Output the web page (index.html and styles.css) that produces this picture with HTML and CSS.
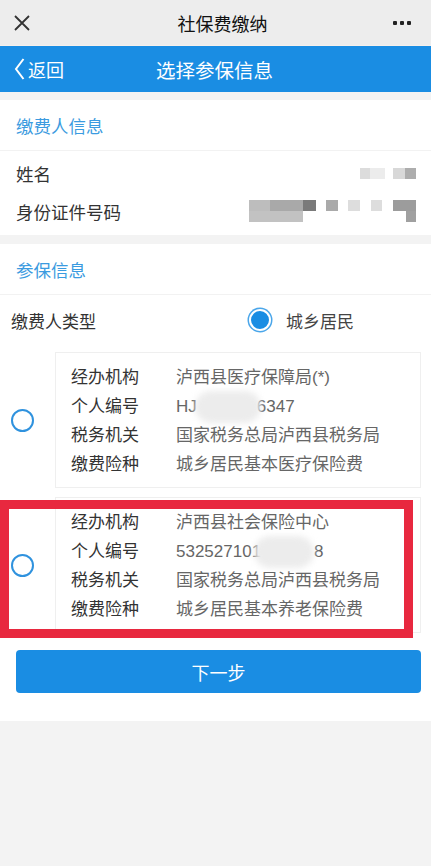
FILE: index.html
```html
<!DOCTYPE HTML>
<html lang="zh-CN">
<head>
    <meta charset="UTF-8">
    <title>社保费缴纳</title>
    <link rel="stylesheet" href="styles.css">
</head>
<body>
<div class="topbar">
    <svg class="close" width="16" height="16" viewBox="0 0 16 16"><path d="M1 1L15 15M15 1L1 15" stroke="#333" stroke-width="1.8" fill="none"/></svg>
    <div class="topTitle">社保费缴纳</div>
    <div class="more"><i></i><i></i><i></i></div>
</div>
<div class="navbar">
    <a class="back" href="#">
        <svg width="11" height="22" viewBox="0 0 11 22"><path d="M9.5 1L2 11L9.5 21" stroke="#fff" stroke-width="2" fill="none"/></svg>
        返回
    </a>
    <div class="navTitle">选择参保信息</div>
</div>

<div class="sec">
    <div class="secHead">缴费人信息</div>
    <ul class="infoList">
        <li>
            <span>姓名</span>
            <svg class="mosaic" width="56" height="11" viewBox="0 0 56 11">
                <rect x="0" y="0" width="10" height="11" fill="#dcdcdc"/>
                <rect x="10" y="0" width="15" height="11" fill="#ececec"/>
                <rect x="33" y="0" width="12" height="11" fill="#d8d8d8"/>
                <rect x="45" y="0" width="11" height="11" fill="#adadad"/>
            </svg>
        </li>
        <li>
            <span>身份证件号码</span>
            <svg class="mosaic" width="167" height="22" viewBox="0 0 167 22">
                <rect x="0" y="0" width="21" height="11" fill="#bdbdbd"/>
                <rect x="21" y="0" width="33" height="11" fill="#a9a9a9"/>
                <rect x="54" y="0" width="13" height="11" fill="#7a7a7a"/>
                <rect x="77" y="0" width="12" height="11" fill="#aaaaaa"/>
                <rect x="99" y="0" width="12" height="11" fill="#dddddd"/>
                <rect x="122" y="0" width="11" height="11" fill="#dddddd"/>
                <rect x="144" y="0" width="23" height="11" fill="#9c9c9c"/>
                <rect x="0" y="11" width="54" height="11" fill="#c2c2c2"/>
                <rect x="157" y="11" width="10" height="11" fill="#a0a0a0"/>
            </svg>
        </li>
    </ul>
</div>

<div class="sec sec2">
    <div class="secHead">参保信息</div>
    <div class="typeRow">
        <span class="typeLabel">缴费人类型</span>
        <span class="typeVal"><i class="radioOn"></i>城乡居民</span>
    </div>
    <div class="items">
        <div class="item">
            <div class="radioBox"><i class="radio"></i></div>
            <div class="card">
                <div class="row"><span class="lab">经办机构</span><span class="val">泸西县医疗保障局(*)</span></div>
                <div class="row"><span class="lab">个人编号</span><span class="val">HJ<i class="mask m1"></i>6347</span></div>
                <div class="row"><span class="lab">税务机关</span><span class="val">国家税务总局泸西县税务局</span></div>
                <div class="row"><span class="lab">缴费险种</span><span class="val">城乡居民基本医疗保险费</span></div>
            </div>
        </div>
        <div class="item">
            <div class="radioBox"><i class="radio"></i></div>
            <div class="card">
                <div class="row"><span class="lab">经办机构</span><span class="val">泸西县社会保险中心</span></div>
                <div class="row"><span class="lab">个人编号</span><span class="val">532527101<i class="mask m2"></i>8</span></div>
                <div class="row"><span class="lab">税务机关</span><span class="val">国家税务总局泸西县税务局</span></div>
                <div class="row"><span class="lab">缴费险种</span><span class="val">城乡居民基本养老保险费</span></div>
            </div>
            <div class="redMark"></div>
        </div>
    </div>
    <button class="nextBtn">下一步</button>
</div>
</body>
</html>
```

FILE: styles.css
```css
body{
    margin:0;
    padding:0;
    background:#f3f3f3;
    font-family:"Liberation Sans","Noto Sans CJK SC",sans-serif;
    color:#333;
}
ul{
    list-style:none;
    margin:0;
    padding:0;
}
.topbar{
    height:46px;
    background:#ededed;
    display:flex;
    align-items:center;
    justify-content:space-between;
    padding:0 20px 0 14px;
    border-bottom:1px solid #f6f0ec;
    box-sizing:border-box;
}
.close{
    display:block;
}
.topTitle{
    font-size:18px;
    color:#111;
    margin-left:22px;
}
.more{
    display:flex;
    gap:3px;
}
.more i{
    width:4px;
    height:4px;
    background:#222;
    border-radius:1px;
}
.navbar{
    height:46px;
    background:#1a8de3;
    display:flex;
    align-items:center;
    color:#fff;
}
.back{
    display:flex;
    align-items:center;
    gap:3px;
    color:#fff;
    text-decoration:none;
    font-size:18px;
    padding-left:14px;
    width:128px;
    box-sizing:border-box;
}
.navTitle{
    font-size:19.5px;
    margin-left:28px;
}
.sec{
    background:#fff;
    margin-top:8px;
}
.sec2{
    margin-top:9px;
    padding-bottom:28px;
}
.secHead{
    height:46px;
    line-height:46px;
    padding:4px 0 0 16px;
    font-size:17.5px;
    color:#3b9be0;
    border-bottom:1px solid #f2f2f2;
}
.infoList{
    padding:3px 0 5px;
}
.infoList li{
    height:38px;
    display:flex;
    align-items:center;
    justify-content:space-between;
    padding:0 15px 0 16px;
    font-size:17.5px;
    color:#333;
}
.mosaic{
    display:block;
    filter:blur(0.6px);
}
.typeRow{
    height:50px;
    display:flex;
    align-items:center;
    font-size:17px;
}
.typeLabel{
    width:238px;
    padding-left:11px;
}
.typeVal{
    display:flex;
    align-items:center;
    color:#444;
}
.radioOn{
    width:18px;
    height:18px;
    border-radius:50%;
    background:#1a8de3;
    border:2px solid #fff;
    box-shadow:0 0 0 1.5px #4aa6ea;
    margin-right:15px;
}
.items{
    padding-top:7px;
}
.item{
    position:relative;
    display:flex;
    margin-bottom:9px;
}
.radioBox{
    width:55px;
    display:flex;
    align-items:center;
}
.radio{
    width:19px;
    height:19px;
    border-radius:50%;
    border:2px solid #2f92de;
    margin-left:11px;
}
.card{
    flex:1;
    margin-right:10px;
    border:1px solid #efefef;
    padding:10px 0 9px 15px;
    box-sizing:border-box;
    height:136px;
}
.row{
    height:29px;
    line-height:29px;
    display:flex;
    font-size:17px;
}
.lab{
    width:105px;
    color:#333;
}
.val{
    color:#666;
    position:relative;
    display:flex;
    align-items:center;
}
.mask{
    display:inline-block;
    height:32px;
    border-radius:16px;
    background:#ececec;
    filter:blur(3px);
}
.m1{
    width:66px;
    margin:0 -4px 0 -2px;
}
.m2{
    width:60px;
    margin:0 0 0 -7px;
}
.redMark{
    position:absolute;
    left:0;
    top:3px;
    width:413px;
    height:138px;
    border:9px solid #e8283f;
    box-sizing:border-box;
}
.nextBtn{
    display:block;
    width:405px;
    height:43px;
    margin:17px 0 0 16px;
    background:#1a8de3;
    border:none;
    border-radius:4px;
    color:#fff;
    font-size:18px;
    font-family:"Liberation Sans","Noto Sans CJK SC",sans-serif;
}
```
